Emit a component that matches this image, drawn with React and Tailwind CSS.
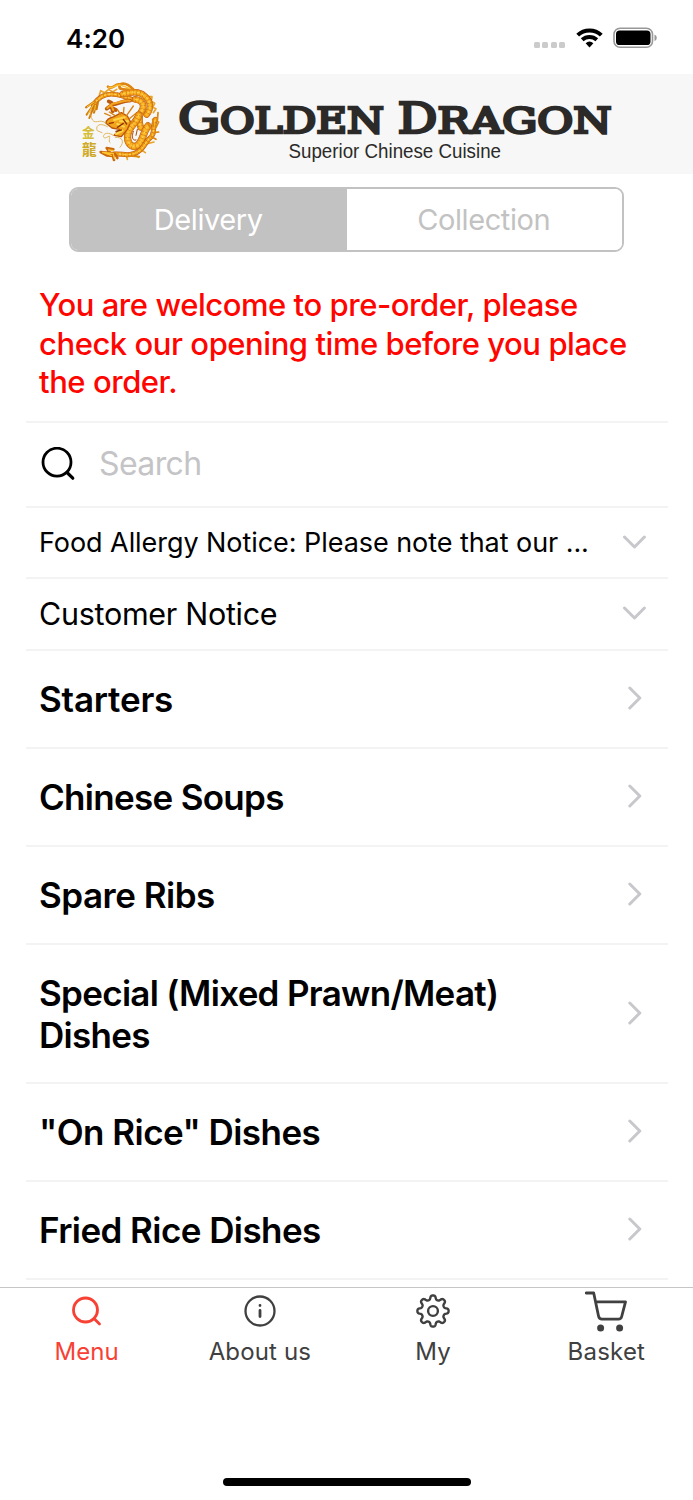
import React, { useState } from 'react';

const categories = [
  { name: 'Starters', spacing: 'tracking-[-0.2px]' },
  { name: 'Chinese Soups', spacing: 'tracking-[-0.7px]' },
  { name: 'Spare Ribs', spacing: 'tracking-[-0.5px]' },
  { name: 'Special (Mixed Prawn/Meat) Dishes', spacing: 'tracking-[-0.7px]', tall: true },
  { name: '"On Rice" Dishes', spacing: 'tracking-[-0.55px]' },
  { name: 'Fried Rice Dishes', spacing: 'tracking-[-0.57px]' }
];

const dragonBody = [
  { d: 'M70 94 C86 66 112 56 140 62 C162 66 178 74 196 78', width: 14 },
  { d: 'M158 60 C184 54 206 50 224 66 C244 82 244 106 230 122', width: 19 },
  { d: 'M196 76 C220 80 226 96 212 116 C206 132 208 146 212 160', width: 20 },
  { d: 'M206 124 C202 144 180 154 174 178 C168 208 186 224 202 214 C220 202 218 176 234 156', width: 22 },
  { d: 'M132 240 C154 238 168 246 188 240 C220 232 224 206 238 194 C258 180 246 160 256 136', width: 15 }
];

const Dragon = () => (
  <svg viewBox="0 0 330 300" className="absolute left-[70px] top-0 h-[100px] w-[110px]" fill="none" strokeLinecap="round" strokeLinejoin="round">
    {/* Spines */}
    <path d="M88 64 L92 50 L104 56 L116 46 L128 54 L140 46 M236 68 L246 68 L244 82 L254 88 L248 100 L258 104 L250 116 M168 240 L172 256 M190 240 L206 250 M212 226 L226 236 M236 208 L252 204" stroke="#eba52a" strokeWidth="5" />
    {dragonBody.map(({ d, width }) => (
      <g key={d}>
        <path d={d} stroke="#b85a10" strokeWidth={width} />
        <path d={d} stroke="#ef9716" strokeWidth={width - 3} />
        <path d={d} stroke="#fcb728" strokeWidth={width - 10} />
        <path d={d} stroke="#a84a0c" strokeWidth={width - 5} strokeDasharray="1.5 9" strokeLinecap="butt" opacity=".6" />
        <path d={d} stroke="#ffdf68" strokeWidth="2.5" strokeDasharray="5 10" />
      </g>
    ))}
    {/* Top crest and limbs */}
    <path d="M114 38 C128 50 136 26 150 32 C162 24 176 32 190 46 M150 34 C142 46 162 48 178 46" stroke="#de8410" strokeWidth="8" />
    <path d="M116 40 C130 46 138 28 154 34 L180 44" stroke="#ffc12f" strokeWidth="4" />
    <path d="M180 80 C160 78 148 90 126 92 L110 104 M124 86 L116 82 M124 94 L128 112 M118 98 L138 108" stroke="#bd590d" strokeWidth="11" />
    <path d="M180 80 C160 76 148 88 126 90 L112 102 M124 94 L130 108" stroke="#f4a520" strokeWidth="6" />
    <path d="M74 82 L48 100 M72 90 L50 122 M74 92 L58 132 M78 94 L72 116 M84 84 L80 106" stroke="#cf7b0b" strokeWidth="6" />
    <path d="M72 84 L52 98 M70 92 L54 120 M76 94 L74 108" stroke="#ffc839" strokeWidth="3" />
    {/* Head */}
    <path d="M108 148 C108 136 118 132 132 128 L154 116 L172 126 L182 144 L172 166 L154 188 L132 184 L148 166 L126 162 Z" fill="#f2a51c" stroke="#ba540a" strokeWidth="4" />
    <path d="M122 126 L104 118 M134 124 L118 114 M152 122 L142 106 M160 122 L162 100 M170 124 L190 96 M178 134 L198 118 M178 148 L192 142" stroke="#d9820f" strokeWidth="4" />
    <path d="M132 138 L164 130 M150 142 L174 142 M142 150 L162 158 M138 180 L158 170" stroke="#ffd648" strokeWidth="6" />
    <path d="M118 148 L130 146 M142 160 L160 148 M138 172 L154 168 M160 136 L170 150" stroke="#8f3503" strokeWidth="4" />
    {/* Whiskers */}
    <path d="M108 148 C90 130 72 158 64 130 L60 110 M112 158 C84 142 76 160 82 170 L96 176 M130 184 C96 162 92 204 114 188 C126 180 112 202 120 206 M136 190 C158 188 164 204 150 220" stroke="#dda83f" strokeWidth="2.5" />
    {/* Tail and right claws */}
    <path d="M130 238 L92 234 L110 244 L128 246 M120 236 L110 222 L130 226 M128 242 L132 258 M136 240 L142 252" stroke="#cb680c" strokeWidth="8" />
    <path d="M130 238 L98 235 L124 244 M116 228 L130 230 M130 242 L134 254" stroke="#ffc52f" strokeWidth="4" />
    <path d="M244 166 L232 146 M250 158 L248 136 M258 160 L266 144 M252 176 L266 174 M244 188 L258 196 M262 142 L264 116 M176 246 L208 248" stroke="#dc870f" strokeWidth="5" />
    <path d="M190 172 C184 190 188 202 198 198 M202 166 L198 184" stroke="#a94605" strokeWidth="3" />
    <text x="36" y="189" fontSize="38" fontWeight="700" fill="#d6bd38" className="font-['Noto_Sans_CJK_TC',sans-serif]">金</text>
    <text x="36" y="243" fontSize="44" fontWeight="700" fill="#cfaa26" className="font-['Noto_Sans_CJK_TC',sans-serif]">龍</text>
  </svg>
);

const Wordmark = () => (
  <svg viewBox="0 0 450 100" className="absolute left-[170px] top-0 h-[100px] w-[450px]" fill="#2b2a28">
    {/* Outlined regular weight keeps the strokes evenly heavy */}
    <g className="font-['DejaVu_Serif',serif]" stroke="#2b2a28" strokeWidth="2.6">
      <text x="8" y="58.6" fontSize="43" textLength="42.5" lengthAdjust="spacingAndGlyphs">G</text>
      <text x="50" y="58.6" fontSize="34.5" textLength="164" lengthAdjust="spacingAndGlyphs">OLDEN</text>
      <text x="227.5" y="58.6" fontSize="43" textLength="40" lengthAdjust="spacingAndGlyphs">D</text>
      <text x="267.5" y="58.6" fontSize="34.5" textLength="174" lengthAdjust="spacingAndGlyphs">RAGON</text>
    </g>
    <text x="118.5" y="84.3" fontSize="20" textLength="212.5" lengthAdjust="spacingAndGlyphs" className="font-['Liberation_Sans',sans-serif]">Superior Chinese Cuisine</text>
  </svg>
);

const StatusBar = () => (
  <div className="flex h-[74px] items-start justify-between pl-[66px] pr-9 pt-6">
    <span className="text-[26px] font-semibold leading-[30px] tracking-[0.1px]">4:20</span>
    <div className="flex items-center gap-2.5 pt-[3px]">
      <div className="mr-px mt-3.5 flex gap-[2.5px]">
        {[0, 1, 2, 3].map((dot) => (
          <span key={dot} className="h-[6px] w-[6px] rounded-[1.5px] bg-[#cbcbcb]" />
        ))}
      </div>
      <svg viewBox="0 0 27 20" className="h-5 w-[27px]" fill="none" stroke="#000" strokeWidth="4">
        <path d="M1.7 7.1 C8.2 .8 18.8 .8 25.3 7.1" />
        <path d="M6.2 11.8 C10.3 8 16.7 8 20.8 11.8" />
        <path d="M9.6 15.2 Q13.5 12 17.4 15.2 L13.5 19.4 Z" fill="#000" stroke="none" />
      </svg>
      <svg viewBox="0 0 44 22" className="h-[22px] w-11">
        <rect x="1" y="1.2" width="38.5" height="19" rx="6" fill="none" stroke="#989898" strokeWidth="1.6" />
        <rect x="3" y="3.4" width="34.5" height="14.7" rx="3.7" />
        <path d="M41.5 7.5 Q43.8 8.3 43.8 10.8 Q43.8 13.3 41.5 14 Z" fill="#989898" />
      </svg>
    </div>
  </div>
);

const SearchIcon = ({ className }) => (
  <svg viewBox="0 0 36 36" className={className} fill="none" stroke="currentColor" strokeWidth="2.8" strokeLinecap="round">
    <circle cx="17" cy="15.2" r="14" />
    <path d="M27 25.5 L32.8 31.2" strokeWidth="3.2" />
  </svg>
);

const Chevron = ({ down }) => (
  <svg viewBox="0 0 24 24" className="relative -top-px h-6 w-6 shrink-0" fill="none" stroke="#c7c7cc" strokeWidth="3" strokeLinecap="round" strokeLinejoin="round">
    <path d={down ? 'M2.5 7 L12.5 17 L22.4 7' : 'M7.8 2 L17.8 12 L7.8 22'} />
  </svg>
);

// Eight rounded teeth around a circle
const gearPoints = Array.from({ length: 160 }, (_, i) => {
  const angle = (i / 160) * Math.PI * 2;
  const radius = 13.6 + 2.1 * Math.tanh(1.8 * Math.cos(angle * 8));
  return `${(21 + radius * Math.cos(angle)).toFixed(2)},${(21 + radius * Math.sin(angle)).toFixed(2)}`;
}).join(' ');

const tabs = [
  {
    label: 'Menu',
    spacing: 'tracking-[0.1px]',
    icon: (
      <svg viewBox="0 0 42 42" className="h-[42px] w-[42px]" fill="none" stroke="currentColor" strokeWidth="2.8" strokeLinecap="round">
        <circle cx="19.5" cy="20" r="12" />
        <path d="M28 28.5 L33.5 34" />
      </svg>
    )
  },
  {
    label: 'About us',
    spacing: 'tracking-[0.15px]',
    icon: (
      <svg viewBox="0 0 42 42" className="h-[42px] w-[42px]" fill="none" stroke="currentColor" strokeWidth="2.3" strokeLinecap="round">
        <circle cx="21" cy="21" r="14.5" />
        <path d="M21 20.5 V26.5 M21 15.5 V15.6" strokeWidth="2.8" />
      </svg>
    )
  },
  {
    label: 'My',
    spacing: 'tracking-[0.2px]',
    icon: (
      <svg viewBox="0 0 42 42" className="h-[42px] w-[42px]" fill="none" stroke="currentColor" strokeWidth="2.4" strokeLinejoin="round">
        <circle cx="21" cy="21" r="4.9" />
        <polygon points={gearPoints} />
      </svg>
    )
  },
  {
    label: 'Basket',
    spacing: 'tracking-[0.2px]',
    icon: (
      <svg viewBox="0 0 42 42" className="h-[42px] w-[42px]" fill="none" stroke="currentColor" strokeWidth="2.8" strokeLinecap="round" strokeLinejoin="round">
        <path d="M1.2 3 H8.7 L13.5 26 Q14.2 29.2 17 29.2 H33.5 Q36 29.2 36.7 26.5 L40.5 11.8 H11" />
        <g fill="currentColor" stroke="none">
          <circle cx="15.6" cy="38" r="3.5" />
          <circle cx="34.6" cy="38" r="3.5" />
        </g>
      </svg>
    )
  }
];

const App = () => {
  const [mode, setMode] = useState('Delivery');
  const [activeTab, setActiveTab] = useState('Menu');

  return (
    <div className="flex h-[1500px] w-[693px] flex-col overflow-hidden bg-white font-['Inter',sans-serif] text-black">
      <StatusBar />

      <header className="relative h-[100px] shrink-0 bg-[#f7f7f7]">
        <Dragon />
        <Wordmark />
      </header>

      <main className="h-[1113px] shrink-0 overflow-hidden">
        {/* Order type */}
        <div className="mx-[69px] mt-[13px] flex h-[65px] w-[555px] overflow-hidden rounded-[9px] border-2 border-[#c2c2c2]">
          {['Delivery', 'Collection'].map((option) => (
            <button
              key={option}
              onClick={() => setMode(option)}
              className={`flex-1 pr-px text-[29px] tracking-[-0.4px] ${mode === option ? 'bg-[#c2c2c2] text-white' : 'bg-white text-[#c2c2c2]'}`}
            >
              {option}
            </button>
          ))}
        </div>

        <div className="ml-[26px] mr-[25px]">
          <p className="h-[169px] whitespace-nowrap pl-[13px] pt-[34px] text-[31px] font-medium leading-[38.5px] tracking-[-0.45px] text-[#ff0500]">
            You are welcome to pre-order, please<br />
            check our opening time before you place<br />
            the order.
          </p>

          <div className="flex h-[85px] items-center border-t-2 border-[#f3f3f3] pl-3.5">
            <SearchIcon className="h-9 w-9" />
            <span className="relative -top-px ml-[23px] text-[32px] tracking-[-0.6px] text-[#c4c4c6]">Search</span>
          </div>

          <div className="flex h-[71px] items-center justify-between border-t-2 border-[#f3f3f3] pl-[13px] pr-[22px]">
            <span className="whitespace-nowrap pt-0.5 text-[27px] tracking-[-0.06px]">Food Allergy Notice: Please note that our ...</span>
            <Chevron down />
          </div>
          <div className="flex h-[72px] items-center justify-between border-t-2 border-[#f3f3f3] pl-[13px] pr-[22px]">
            <span className="whitespace-nowrap text-[30.5px] tracking-[-0.3px]">Customer Notice</span>
            <Chevron down />
          </div>

          {/* Categories */}
          {categories.map(({ name, spacing, tall }) => (
            <div
              key={name}
              className={`flex items-center justify-between border-t-2 border-[#f3f3f3] pl-[13px] pr-[22px] ${tall ? 'h-[139px]' : 'h-[98px]'}`}
            >
              <h2 className={`w-[520px] text-[35px] font-semibold leading-[42px] ${spacing}`}>{name}</h2>
              <Chevron />
            </div>
          ))}
          <div className="border-t-2 border-[#f3f3f3]" />
        </div>
      </main>

      <nav className="grid h-[213px] shrink-0 grid-cols-4 content-start border-t border-[#c6c6c8] pt-[2px]">
        {tabs.map(({ label, icon, spacing }) => (
          <button
            key={label}
            onClick={() => setActiveTab(label)}
            className={`flex flex-col items-center ${activeTab === label ? 'text-[#f74134]' : 'text-[#404040]'}`}
          >
            {icon}
            <span className={`mt-[5px] text-[24px] leading-[30px] ${spacing}`}>{label}</span>
          </button>
        ))}
        <div className="col-span-4 mx-auto mt-[111px] h-2 w-[248px] rounded-full bg-black" />
      </nav>
    </div>
  );
};

export default App;
